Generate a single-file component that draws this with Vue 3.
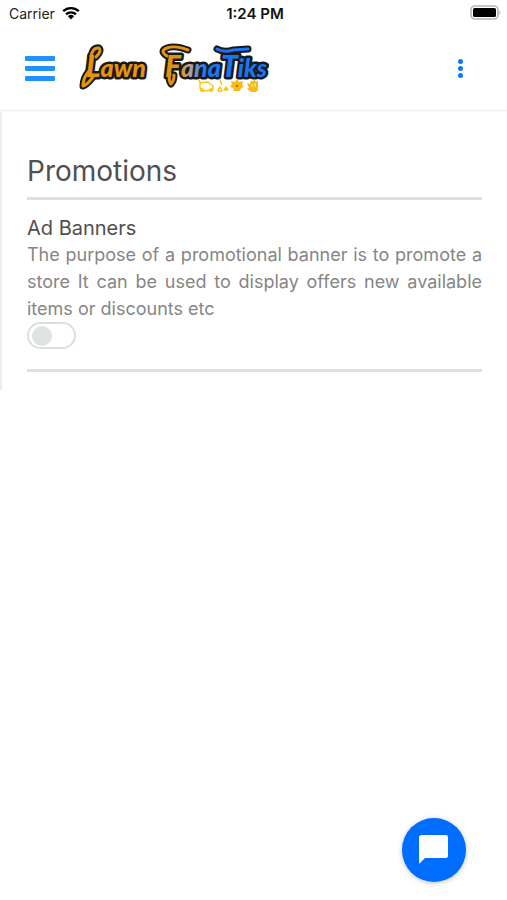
<template>
  <div class="app">
    <div class="status-bar">
      <div class="carrier">
        <span>Carrier</span>
        <svg class="wifi" viewBox="0 0 18 14" aria-hidden="true">
          <path d="M1.2 5.2a11.2 11.2 0 0 1 15.6 0M4 8.3a7.2 7.2 0 0 1 10 0" fill="none" stroke="#000" stroke-width="2.3" />
          <path d="M5.9 10.2a4.6 4.6 0 0 1 6.2 0L9 13.6z" fill="#000" />
        </svg>
      </div>
      <span class="time">{{ time }}</span>
      <svg class="battery" viewBox="0 0 32 16" aria-hidden="true">
        <rect x="2" y="1" width="27" height="13" rx="4" fill="#fff" stroke="#b5b5b5" stroke-width="1.6" />
        <rect x="4" y="3" width="23" height="9" rx="1.5" fill="#000" />
        <path d="M30.4 5.2q2.2 2.3 0 4.6z" fill="#b5b5b5" />
      </svg>
    </div>

    <header class="header">
      <button class="menu-button" type="button" aria-label="Menu">
        <span v-for="n in 3" :key="n" class="bar"></span>
      </button>

      <svg class="logo" viewBox="0 0 190 56" role="img" aria-label="Lawn Fanatiks">
        <defs>
          <linearGradient id="fanatiks" gradientUnits="userSpaceOnUse" x1="82" y1="0" x2="188" y2="0">
            <stop offset="0.18" stop-color="#e2940f" />
            <stop offset="0.27" stop-color="#b0a29a" />
            <stop offset="0.42" stop-color="#1c75f5" />
          </linearGradient>
        </defs>
        <g class="swash outline">
          <path d="M10 31Q4 38 4 46Q8 45 14 37" />
          <path d="M12 16Q14 7 20 8Q23 11 17 17" />
          <path d="M91 34Q89 40 92 44Q95 41 95 35" />
          <path d="M88 16Q80 11 88 8Q96 5 109 10" />
          <path d="M138 9Q145 13 154 10L169 9" />
        </g>
        <g class="lettering outline">
          <text x="7" y="37"><tspan class="capital">L</tspan>awn</text>
          <text x="86" y="37"><tspan class="capital">F</tspan>ana<tspan class="capital">T</tspan>iks</text>
        </g>
        <g class="lettering" aria-hidden="true">
          <text x="7" y="37" fill="#e2940f"><tspan class="capital">L</tspan>awn</text>
          <text x="86" y="37" fill="url(#fanatiks)"><tspan class="capital">F</tspan>ana<tspan class="capital">T</tspan>iks</text>
        </g>
        <g class="swash">
          <path stroke="#e2940f" d="M10 31Q4 38 4 46Q8 45 14 37" />
          <path stroke="#e2940f" d="M12 16Q14 7 20 8Q23 11 17 17" />
          <path stroke="#e2940f" d="M91 34Q89 40 92 44Q95 41 95 35" />
          <path stroke="#e2940f" d="M88 16Q80 11 88 8Q96 5 109 10" />
          <path stroke="#1c75f5" d="M138 9Q145 13 154 10L169 9" />
        </g>
        <!-- mower, spray, flower and glove -->
        <g fill="none" stroke="#f8c51c" stroke-width="1.4" stroke-linejoin="round">
          <path d="M119 39l3 5M121 43l8-1 5 4v4l-11 1-2-3z" />
          <circle cx="123" cy="50" r="1.4" />
          <circle cx="132" cy="50" r="1.4" />
          <path d="M141 40l2 5M139 50l2-3 2 4h-4zM145 50l2-3 2 3z" />
        </g>
        <path d="M158 39l2 3 4-1-1 4 2 2-3 1-1 3h-6l-1-3-3-1 2-3-1-3 4 1z" fill="#f8b919" />
        <circle cx="158" cy="46" r="1.2" fill="#b9770e" />
        <path d="M168 43l3 1 1-4 2 2 1-3 2 3 2-2v10l-2 2h-5l-4-3 2-1z" fill="#f8bd14" />
        <path d="M173 44v3M176 43v4" stroke="#fff0b5" />
      </svg>

      <button class="more-button" type="button" aria-label="More options">
        <span v-for="n in 3" :key="n" class="dot"></span>
      </button>
    </header>

    <main class="panel">
      <h1>Promotions</h1>
      <section v-for="setting in settings" :key="setting.id" class="setting">
        <h2><label :for="setting.id">{{ setting.title }}</label></h2>
        <p>{{ setting.description }}</p>
        <input :id="setting.id" v-model="setting.enabled" class="toggle" type="checkbox" role="switch">
      </section>
    </main>

    <button class="chat-button" type="button" aria-label="Open chat">
      <svg viewBox="0 0 30 30" aria-hidden="true">
        <path d="M3 0h24q2 0 2 2v19q0 2-2 2H6l-6 6V2q0-2 3-2z" fill="#fff" />
      </svg>
    </button>
  </div>
</template>

<script setup>
import { ref } from 'vue';

const time = '1:24 PM';

const settings = ref([
  {
    id: 'ad-banners',
    title: 'Ad Banners',
    description: 'The purpose of a promotional banner is to promote a store It can be used to display offers new available items or discounts etc',
    enabled: false
  }
]);
</script>

<style>
body {
  margin: 0;
  background: #fff;
}
</style>

<style scoped>
.app {
  min-height: 100vh;
  background: #fff;
  font-family: Inter, "Liberation Sans", sans-serif;
}

button {
  padding: 0;
  border: none;
  background: none;
  cursor: pointer;
}

.status-bar {
  display: grid;
  grid-template-columns: 1fr auto 1fr;
  align-items: center;
  height: 26px;
  padding: 0 6px 0 9px;
  font-size: 14px;
  color: #222;
}

.carrier {
  display: flex;
  align-items: center;
  gap: 7px;
}

.wifi {
  width: 18px;
  height: 14px;
}

.time {
  font-size: 15px;
  font-weight: 600;
  color: #111;
}

.battery {
  justify-self: end;
  width: 32px;
  height: 16px;
}

.header {
  display: flex;
  align-items: center;
  box-sizing: border-box;
  height: 84px;
  padding: 0 40px 0 25px;
  box-shadow: 0 1px 2px rgba(0, 0, 0, 0.1);
}

.menu-button {
  display: flex;
  flex-direction: column;
  gap: 5px;
  width: 30px;
}

.bar {
  height: 5px;
  width: 100%;
  border-radius: 1px;
  background: #2391fc;
}

.logo {
  width: 190px;
  height: 56px;
  margin-left: 24px;
}

.lettering {
  font-family: Lato, sans-serif;
  font-size: 25px;
  font-style: italic;
  font-weight: 900;
}

.capital {
  font-size: 30px;
}

.swash {
  fill: none;
  stroke-width: 3;
  stroke-linecap: round;
  stroke-linejoin: round;
}

.outline {
  stroke: #17191c;
  stroke-width: 5;
  stroke-linejoin: round;
}

.swash.outline {
  stroke-width: 7;
}

.more-button {
  display: flex;
  flex-direction: column;
  align-items: center;
  gap: 2px;
  width: 14px;
  margin-left: auto;
}

.dot {
  width: 5px;
  height: 5px;
  border-radius: 50%;
  background: #0b78f5;
}

.panel {
  margin-top: 2px;
  padding: 44px 25px 18px;
  border-left: 2px solid #eee;
}

h1 {
  margin: 0;
  padding-bottom: 10px;
  border-bottom: 3px solid #dedfe0;
  font-size: 28px;
  font-weight: 400;
  line-height: 31px;
  color: #505050;
}

.setting {
  padding-top: 15px;
  padding-bottom: 20px;
  border-bottom: 3px solid #dedfe0;
}

h2 {
  margin: 0;
  font-size: 20px;
  font-weight: 400;
  line-height: 26px;
  color: #505050;
}

p {
  margin: 0;
  font-size: 18px;
  line-height: 27px;
  color: #868686;
  text-align: justify;
}

.toggle {
  display: flex;
  align-items: center;
  box-sizing: border-box;
  width: 49px;
  height: 27px;
  margin: 0;
  padding: 0 3px;
  border: 2px solid #dcdfe0;
  border-radius: 14px;
  background: #fff;
  appearance: none;
  cursor: pointer;
}

.toggle::before {
  content: "";
  width: 20px;
  height: 20px;
  border-radius: 50%;
  background: #dfe3e4;
}

.toggle:checked {
  justify-content: flex-end;
  border-color: #0b78f5;
}

.toggle:checked::before {
  background: #0b78f5;
}

.chat-button {
  position: fixed;
  right: 41px;
  bottom: 18px;
  display: flex;
  align-items: center;
  justify-content: center;
  width: 64px;
  height: 64px;
  border-radius: 50%;
  background: #006dff;
  box-shadow: 0 1px 5px rgba(0, 0, 0, 0.25);
}

.chat-button svg {
  width: 30px;
  height: 30px;
}
</style>
